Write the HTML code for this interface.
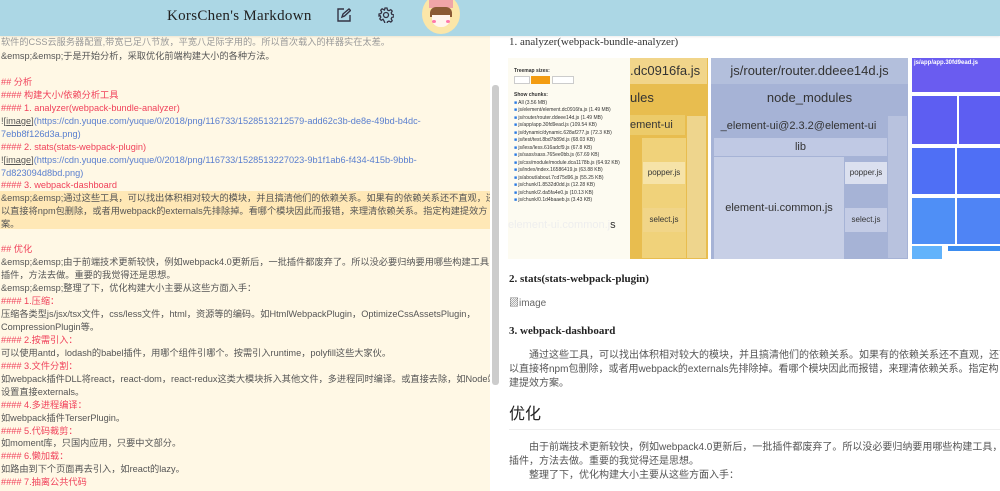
<!DOCTYPE html>
<html><head><meta charset="utf-8"><style>
*{margin:0;padding:0;box-sizing:border-box}
body{width:1000px;height:491px;overflow:hidden;background:#fff;font-family:"Liberation Sans","Noto Sans CJK SC",sans-serif;position:relative}
.hdr{position:absolute;left:0;top:0;width:1000px;height:36px;background:#acd7e5;z-index:5;box-shadow:0 1px 2px rgba(0,0,0,.08)}
.title{position:absolute;left:167px;top:8px;font:15px "Liberation Serif","Noto Serif CJK SC",serif;color:#222;letter-spacing:.3px}
.left{position:absolute;left:0;top:36px;width:490px;height:455px;background:#fff8e5;overflow:hidden}
.l{position:absolute;left:1px;font-size:9.2px;line-height:13px;color:#555;white-space:nowrap}
.r{color:#f0415a}.u{color:#5a7fcf}
.hl{position:absolute;left:0;top:155px;width:490px;height:38px;background:#ffe8b6}
.sb{position:absolute;left:492px;top:85px;width:7px;height:300px;background:#ccc;border-radius:3px}
.right{position:absolute;left:500px;top:36px;width:500px;height:455px;overflow:hidden}
.p{position:absolute;left:9px;font-size:10px;line-height:14px;color:#555;white-space:nowrap}
.h4{position:absolute;left:9px;font:bold 11px "Liberation Serif",serif;color:#222}
.b{position:absolute}
</style></head><body>
<div class="hdr">
<div class="title">KorsChen's Markdown</div>
<svg style="position:absolute;left:337px;top:8px" width="14" height="14" viewBox="0 0 14 14" fill="none" stroke="#334" stroke-width="1.4"><path d="M7 1H1v12h12V7"/><path d="M5 9l1-3 6-5 1.5 1.5-6 5.5z"/></svg>
<svg style="position:absolute;left:378px;top:7px" width="16" height="16" viewBox="0 0 16 16" fill="none" stroke="#334" stroke-width="1.3"><circle cx="8" cy="8" r="2.5"/><path d="M7 1h2l.5 2 1.5.7 1.8-1 1.4 1.4-1 1.8.7 1.5 2 .5v2l-2 .5-.7 1.5 1 1.8-1.4 1.4-1.8-1-1.5.7-.5 2H7l-.5-2L5 12.3l-1.8 1-1.4-1.4 1-1.8L2.1 8.6 1 9V7l2-.5.7-1.5-1-1.8 1.4-1.4 1.8 1L6.5 3z"/></svg>
<div style="position:absolute;left:422px;top:-6px;width:38px;height:40px;border-radius:50%;background:#fbe6a8;overflow:hidden">
<div style="position:absolute;left:7px;top:0;width:24px;height:14px;background:#f0a5a8"></div>
<div style="position:absolute;left:8px;top:13px;width:22px;height:10px;background:#8a5a35;border-radius:6px 6px 0 0"></div>
<div style="position:absolute;left:10px;top:21px;width:18px;height:12px;background:#fff5ee;border-radius:0 0 8px 8px"></div>
<div style="position:absolute;left:10px;top:26px;width:4px;height:3px;background:#f7a;border-radius:50%"></div>
<div style="position:absolute;left:24px;top:26px;width:4px;height:3px;background:#f7a;border-radius:50%"></div>
</div>
</div>

<div class="left">
<div class="hl"></div>
<div class="l" style="top:0px;color:#999">软件的CSS云服务器配置,带宽已足八节放，平宽八足际字用的。所以首次载入的样器实在太差。</div>
<div class="l" style="top:14px">&amp;emsp;&amp;emsp;于是开始分析，采取优化前端构建大小的各种方法。</div>
<div class="l r" style="top:40px">## 分析</div>
<div class="l r" style="top:53px">#### 构建大小/依赖分析工具</div>
<div class="l r" style="top:66px">#### 1. analyzer(webpack-bundle-analyzer)</div>
<div class="l" style="top:79px">![<u>image</u>]<span class="u">(https://cdn.yuque.com/yuque/0/2018/png/116733/1528513212579-add62c3b-de8e-49bd-b4dc-</span></div>
<div class="l u" style="top:92px">7ebb8f126d3a.png)</div>
<div class="l r" style="top:105px">#### 2. stats(stats-webpack-plugin)</div>
<div class="l" style="top:118px">![<u>image</u>]<span class="u">(https://cdn.yuque.com/yuque/0/2018/png/116733/1528513227023-9b1f1ab6-f434-415b-9bbb-</span></div>
<div class="l u" style="top:131px">7d823094d8bd.png)</div>
<div class="l r" style="top:143px">#### 3. webpack-dashboard</div>
<div class="l" style="top:156px">&amp;emsp;&amp;emsp;通过这些工具，可以找出体积相对较大的模块，并且搞清他们的依赖关系。如果有的依赖关系还不直观，还可</div>
<div class="l" style="top:169px">以直接将npm包删除，或者用webpack的externals先排除掉。看哪个模块因此而报错，来理清依赖关系。指定构建提效方</div>
<div class="l" style="top:182px">案。</div>
<div class="l r" style="top:207px">## 优化</div>
<div class="l" style="top:220px">&amp;emsp;&amp;emsp;由于前端技术更新较快，例如webpack4.0更新后，一批插件都废弃了。所以没必要归纳要用哪些构建工具，</div>
<div class="l" style="top:233px">插件，方法去做。重要的我觉得还是思想。</div>
<div class="l" style="top:246px">&amp;emsp;&amp;emsp;整理了下，优化构建大小主要从这些方面入手：</div>
<div class="l r" style="top:259px">#### 1.压缩：</div>
<div class="l" style="top:272px">压缩各类型js/jsx/tsx文件，css/less文件，html，资源等的编码。如HtmlWebpackPlugin，OptimizeCssAssetsPlugin，</div>
<div class="l" style="top:285px">CompressionPlugin等。</div>
<div class="l r" style="top:298px">#### 2.按需引入：</div>
<div class="l" style="top:311px">可以使用antd，lodash的babel插件，用哪个组件引哪个。按需引入runtime，polyfill这些大家伙。</div>
<div class="l r" style="top:324px">#### 3.文件分割：</div>
<div class="l" style="top:337px">如webpack插件DLL将react，react-dom，react-redux这类大模块拆入其他文件，多进程同时编译。或直接去除，如Node端</div>
<div class="l" style="top:350px">设置直接externals。</div>
<div class="l r" style="top:363px">#### 4.多进程编译：</div>
<div class="l" style="top:376px">如webpack插件TerserPlugin。</div>
<div class="l r" style="top:389px">#### 5.代码裁剪：</div>
<div class="l" style="top:401px">如moment库，只国内应用，只要中文部分。</div>
<div class="l r" style="top:414px">#### 6.懒加载：</div>
<div class="l" style="top:427px">如路由到下个页面再去引入，如react的lazy。</div>
<div class="l r" style="top:440px">#### 7.抽离公共代码</div>
</div>
<div class="sb"></div>

<div class="right">
<div class="h4" style="top:0px;font-weight:normal;color:#333">1. analyzer(webpack-bundle-analyzer)</div>
<div class="b" style="left:8px;top:22px;width:122px;height:201px;background:#fdfbf1"></div>
<div class="b" style="left:130px;top:22px;width:78px;height:201px;background:#e8bd4f"></div>
<div class="b" style="left:130px;top:22px;width:77px;height:26px;background:#f1d58a;font-size:13px;color:#333;line-height:26px">.dc0916fa.js</div>
<div class="b" style="left:130px;top:54px;font-size:13px;color:#333">ules</div>
<div class="b" style="left:130px;top:79px;width:55px;height:20px;background:#eccb6a;font-size:11px;color:#333;line-height:20px">ement-ui</div>
<div class="b" style="left:142px;top:102px;width:44px;height:120px;background:#f0d27a"></div>
<div class="b" style="left:143px;top:126px;width:42px;height:22px;background:#f6e3a8;font-size:8px;color:#333;line-height:22px;text-align:center">popper.js</div>
<div class="b" style="left:143px;top:172px;width:42px;height:24px;background:#f1d588;font-size:8px;color:#333;line-height:24px;text-align:center">select.js</div>
<div class="b" style="left:187px;top:80px;width:19px;height:142px;background:#eed58d"></div>
<div class="b" style="left:8px;top:183px;font-size:11px;color:#eee">element-ui.common.j<span style="color:#333">s</span></div>
<div class="b" style="left:14px;top:32px;font-size:5px;line-height:7.5px;color:#333;font-weight:bold">Treemap sizes:</div>
<div class="b" style="left:14px;top:40px;width:16px;height:8px;border:1px solid #ccc;background:#fff"></div>
<div class="b" style="left:31px;top:40px;width:19px;height:8px;background:#f39c12"></div>
<div class="b" style="left:52px;top:40px;width:22px;height:8px;border:1px solid #ccc;background:#fff"></div>
<div class="b" style="left:14px;top:56px;font-size:5px;line-height:7.5px;color:#333;width:116px">
<b>Show chunks:</b><br>
<span style="color:#2a7ae2">■</span> All (3.56 MB)<br><span style="color:#2a7ae2">■</span> js/element/element.dc0916fa.js (1.49 MB)<br><span style="color:#2a7ae2">■</span> js/router/router.ddeee14d.js (1.49 MB)<br><span style="color:#2a7ae2">■</span> js/app/app.30fd9ead.js (109.54 KB)<br><span style="color:#2a7ae2">■</span> js/dynamic/dynamic.628af277.js (72.3 KB)<br><span style="color:#2a7ae2">■</span> js/test/test.8bd7b89d.js (68.03 KB)<br><span style="color:#2a7ae2">■</span> js/less/less.616adcf9.js (67.8 KB)<br><span style="color:#2a7ae2">■</span> js/sass/sass.765ee0bb.js (67.69 KB)<br><span style="color:#2a7ae2">■</span> js/css/module/module.dca1178b.js (64.92 KB)<br><span style="color:#2a7ae2">■</span> js/index/index.16586419.js (63.88 KB)<br><span style="color:#2a7ae2">■</span> js/about/about.7cd75d96.js (55.25 KB)<br><span style="color:#2a7ae2">■</span> js/chunk/1.8532d0dd.js (12.28 KB)<br><span style="color:#2a7ae2">■</span> js/chunk/2.da5fa4e0.js (10.13 KB)<br><span style="color:#2a7ae2">■</span> js/chunk/0.1d4baaeb.js (3.43 KB)</div>
<div class="b" style="left:211px;top:22px;width:197px;height:201px;background:#a6b3d6"></div>
<div class="b" style="left:211px;top:22px;width:197px;height:26px;background:#b3bfdc;font-size:13px;color:#333;line-height:26px;text-align:center">js/router/router.ddeee14d.js</div>
<div class="b" style="left:211px;top:54px;width:197px;font-size:13px;color:#333;text-align:center">node_modules</div>
<div class="b" style="left:211px;top:80px;width:175px;height:20px;font-size:11px;color:#333;line-height:20px;text-align:center">_element-ui@2.3.2@element-ui</div>
<div class="b" style="left:214px;top:102px;width:173px;height:18px;background:#c0c9e4;font-size:11px;color:#333;line-height:18px;text-align:center">lib</div>
<div class="b" style="left:214px;top:121px;width:130px;height:102px;background:#c7cfe6;font-size:11px;color:#333;line-height:102px;text-align:center">element-ui.common.js</div>
<div class="b" style="left:345px;top:126px;width:42px;height:22px;background:#dbe0ef;font-size:8px;color:#333;line-height:22px;text-align:center">popper.js</div>
<div class="b" style="left:345px;top:172px;width:42px;height:24px;background:#c4cce5;font-size:8px;color:#333;line-height:24px;text-align:center">select.js</div>
<div class="b" style="left:388px;top:80px;width:19px;height:142px;background:#b8c2de"></div>
<div class="b" style="left:412px;top:22px;width:88px;height:34px;background:#6a5cf0;color:#fff;font-size:6px;font-weight:bold;padding:2px">js/app/app.30fd9ead.js</div>
<div class="b" style="left:412px;top:60px;width:45px;height:48px;background:#5d5ef2"></div>
<div class="b" style="left:459px;top:60px;width:41px;height:48px;background:#5d5ef2"></div>
<div class="b" style="left:412px;top:112px;width:43px;height:46px;background:#4f6ff5"></div>
<div class="b" style="left:457px;top:112px;width:43px;height:46px;background:#4f6ff5"></div>
<div class="b" style="left:412px;top:162px;width:43px;height:46px;background:#4f8ff6"></div>
<div class="b" style="left:457px;top:162px;width:43px;height:46px;background:#4f84f5"></div>
<div class="b" style="left:412px;top:210px;width:30px;height:13px;background:#62b3fb"></div>
<div class="b" style="left:448px;top:210px;width:52px;height:5px;background:#3b8cf0"></div>
<div class="h4" style="top:237px">2. stats(stats-webpack-plugin)</div>
<div class="p" style="top:261px;color:#666">▨image</div>
<div class="h4" style="top:289px">3. webpack-dashboard</div>
<div class="p" style="top:313px">&emsp;&emsp;通过这些工具，可以找出体积相对较大的模块，并且搞清他们的依赖关系。如果有的依赖关系还不直观，还可</div>
<div class="p" style="top:327px">以直接将npm包删除，或者用webpack的externals先排除掉。看哪个模块因此而报错，来理清依赖关系。指定构</div>
<div class="p" style="top:341px">建提效方案。</div>
<div class="p" style="top:369px;font-size:16px;line-height:20px;color:#222">优化</div>
<div class="b" style="left:9px;top:393px;width:491px;height:1px;background:#eee"></div>
<div class="p" style="top:405px">&emsp;&emsp;由于前端技术更新较快，例如webpack4.0更新后，一批插件都废弃了。所以没必要归纳要用哪些构建工具，</div>
<div class="p" style="top:419px">插件，方法去做。重要的我觉得还是思想。</div>
<div class="p" style="top:433px">&emsp;&emsp;整理了下，优化构建大小主要从这些方面入手：</div>
</div>
</body></html>
